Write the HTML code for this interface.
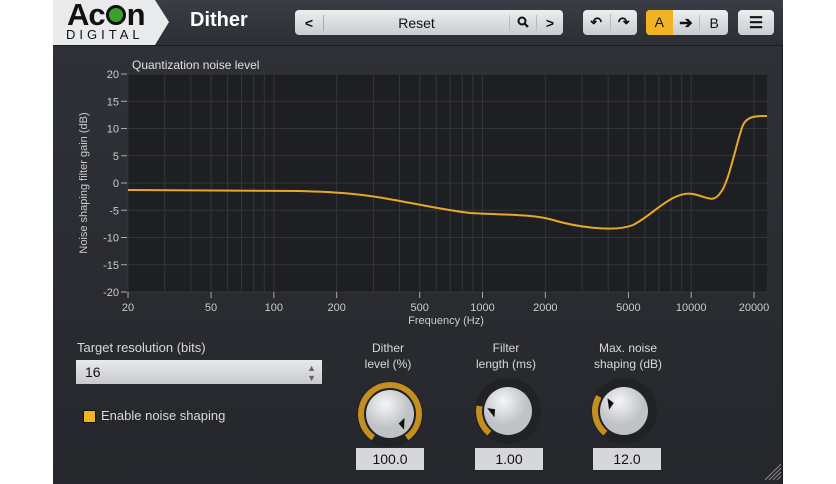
<!DOCTYPE html>
<html><head><meta charset="utf-8"><style>
body{margin:0;width:836px;height:484px;background:#fff;overflow:hidden;font-family:"Liberation Sans",sans-serif;position:relative}
#app{position:absolute;left:53px;top:0;width:730px;height:484px;background:linear-gradient(#2f3238,#25272c);}
#hdr{position:absolute;left:0;top:0;width:730px;height:45px;background:linear-gradient(#3a3d44,#2c2e34);border-bottom:1px solid #1b1c20}
.btn{position:absolute;top:10px;height:25px;background:linear-gradient(#eceef0,#c9ccd0);border-radius:4px;color:#111;font-size:14px;display:flex;align-items:center;justify-content:center}
.t{position:absolute;color:#d8d9db;font-size:12px}
.val{position:absolute;top:448px;width:68px;height:22px;background:#d5d7da;color:#111;font-size:14px;text-align:center;line-height:22px}
</style></head><body>
<div id="app">
<div id="hdr">
 <div style="position:absolute;left:0;top:0;width:116px;height:45px;background:#e9eaeb;clip-path:polygon(0 0,102px 0,116px 22px,102px 45px,0 45px)"></div>
 <div style="position:absolute;left:14px;top:-3px;font-size:31px;font-weight:bold;color:#111;letter-spacing:-1px">Ac<span style="display:inline-block;width:14px;height:14px;border-radius:50%;border:3px solid #111;background:#3aa02e;vertical-align:0px;margin:0 1px"></span>n</div>
 <div style="position:absolute;left:13px;top:27px;font-size:13px;color:#111;letter-spacing:4px">DIGITAL</div>
 <div style="position:absolute;left:137px;top:9px;font-size:20px;font-weight:bold;color:#fff">Dither</div>
 <div class="btn" style="left:242px;width:268px;justify-content:flex-start"><span style="width:28px;text-align:center;font-weight:bold;border-right:1px solid #aaa">&lt;</span><span style="flex:1;text-align:center">Reset</span><span style="width:26px;text-align:center;border-left:1px solid #bbb;font-weight:bold"><svg width="12" height="12" viewBox="0 0 12 12"><circle cx="5" cy="5" r="3.5" fill="none" stroke="#111" stroke-width="2"/><path d="M7.5 7.5L11 11" stroke="#111" stroke-width="2.2"/></svg></span><span style="width:26px;text-align:center;border-left:1px solid #bbb;font-weight:bold">&gt;</span></div>
 <div class="btn" style="left:530px;width:54px"><span style="width:27px;text-align:center;font-weight:bold">↶</span><span style="width:27px;text-align:center;font-weight:bold;border-left:1px solid #bbb">↷</span></div>
 <div class="btn" style="left:593px;width:82px;overflow:hidden;justify-content:flex-start"><span style="width:27px;height:25px;line-height:25px;text-align:center;background:#f0b323">A</span><span style="width:27px;text-align:center;font-weight:bold;font-size:16px">➔</span><span style="width:28px;text-align:center;border-left:1px solid #bbb">B</span></div>
 <div class="btn" style="left:685px;width:36px;font-size:16px;font-weight:bold">☰</div>
</div>
<svg style="position:absolute;left:0;top:0" width="730" height="484" id="g"></svg>
<div class="t" style="left:24px;top:340px;font-size:13px">Target resolution (bits)</div>
<div style="position:absolute;left:23px;top:360px;width:246px;height:24px;background:linear-gradient(#e8e9eb,#c8cace);color:#111;font-size:14px;line-height:24px;padding-left:9px;box-sizing:border-box">16<span style="position:absolute;right:6px;top:0;font-size:9px;color:#666;line-height:10px;padding-top:3px">▲<br>▼</span></div>
<div style="position:absolute;left:30px;top:410px;width:11px;height:11px;background:#f0b323;border:1px solid #111"></div>
<div class="t" style="left:48px;top:408px;font-size:13px">Enable noise shaping</div>
<div class="t" style="left:305px;top:340px;width:60px;text-align:center;line-height:16px">Dither<br>level (%)</div>
<div class="t" style="left:418px;top:340px;width:70px;text-align:center;line-height:16px">Filter<br>length (ms)</div>
<div class="t" style="left:535px;top:340px;width:80px;text-align:center;line-height:16px">Max. noise<br>shaping (dB)</div>
<div class="val" style="left:303px">100.0</div>
<div class="val" style="left:422px">1.00</div>
<div class="val" style="left:540px">12.0</div>
</div>
<script>
var s='',NS=document.getElementById('g');
s+='<rect x="75" y="74" width="639" height="218" fill="#1e1f22"/>';
function fx(f){return 75+Math.log10(f/20)/3*626}
var fs=[];for(var d=10;d<=10000;d*=10)for(var m=1;m<10;m++){var f=d*m;if(f>=20&&f<=22000)fs.push(f)}fs.push(20000);
fs.forEach(function(f){var x=fx(f);s+='<line x1="'+x+'" y1="74" x2="'+x+'" y2="292" stroke="#34363b" stroke-width="1"/>'});
for(var i=0;i<=8;i++){var y=74+i*27.25;s+='<line x1="75" y1="'+y+'" x2="714" y2="'+y+'" stroke="#34363b"/><line x1="68" y1="'+y+'" x2="74" y2="'+y+'" stroke="#aaa"/><text x="66" y="'+(y+4)+'" fill="#ccc" font-size="11" text-anchor="end" font-family="Liberation Sans">'+(20-5*i)+'</text>'}
[20,50,100,200,500,1000,2000,5000,10000,20000].forEach(function(f){var x=fx(f);s+='<line x1="'+x+'" y1="292" x2="'+x+'" y2="298" stroke="#aaa"/><text x="'+x+'" y="311" fill="#ccc" font-size="11" text-anchor="middle" font-family="Liberation Sans">'+f+'</text>'});
s+='<text x="79" y="69" fill="#e0e0e0" font-size="12" font-family="Liberation Sans">Quantization noise level</text>';
s+='<text x="393" y="324" fill="#ccc" font-size="11" text-anchor="middle" font-family="Liberation Sans">Frequency (Hz)</text>';
s+='<text transform="translate(34,183) rotate(-90)" fill="#ccc" font-size="11" text-anchor="middle" font-family="Liberation Sans">Noise shaping filter gain (dB)</text>';
s+='<path d="M75 190 L247 191 C280 192 300 193 330 198 C360 203 390 210 417 213 C450 215 480 214 500 220 C520 226 560 233 580 225 C600 215 620 190 640 194 C655 197 660 204 668 192 C676 182 684 140 690 125 C694 117 700 116 714 116" fill="none" stroke="#e8a826" stroke-width="2"/>';
function knob(cx,cy,a0,a1,ang){var r=29,o='';function p(a,R){a=(a-90)*Math.PI/180;return [cx+R*Math.cos(a),cy+R*Math.sin(a)]}
o+='<circle cx="'+cx+'" cy="'+cy+'" r="33" fill="#212226"/>';
var A=p(a0,r),B=p(a1,r),l=(a1-a0)>180?1:0;o+='<path d="M'+A[0]+' '+A[1]+' A'+r+' '+r+' 0 '+l+' 1 '+B[0]+' '+B[1]+'" fill="none" stroke="#c48f1e" stroke-width="6"/>';
o+='<defs><radialGradient id="k'+cx+'" cx="0.4" cy="0.3"><stop offset="0" stop-color="#f4f5f6"/><stop offset="1" stop-color="#bfc2c6"/></radialGradient></defs><circle cx="'+cx+'" cy="'+cy+'" r="24" fill="url(#k'+cx+')"/>';
var T=p(ang-25,15),L=p(ang+8,21),R=p(ang+8,13);o+='<polygon points="'+T+' '+L+' '+R+'" fill="#111"/>';return o}
s+=knob(337,414,-145,145,130);
s+=knob(455,411,-140,-80,-90);
s+=knob(571,411,-140,-60,-60);
s+='<path d="M716 480 L728 468 M720 480 L728 472 M724 480 L728 476 M712 480 L728 464" stroke="#888"/>';
s+='<rect x="729" y="45" width="1" height="439" fill="#1b1c20"/>';
NS.innerHTML=s;
</script>
</body></html>
